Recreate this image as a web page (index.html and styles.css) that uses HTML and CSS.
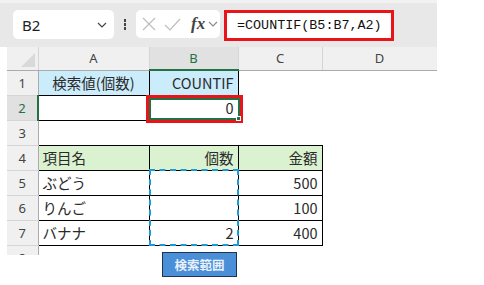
FILE: index.html
```html
<!DOCTYPE html>
<html lang="ja">
<head>
    <meta charset="UTF-8">
    <title>COUNTIF</title>
    <link rel="stylesheet" href="styles.css">
</head>
<body>
    <div class="app">
        <div class="toolbar">
            <div class="name-box">
                <span class="name-text">B2</span>
                <svg class="chev" width="10" height="6" viewBox="0 0 10 6"><polyline points="1,1 5,5 9,1" fill="none" stroke="#444" stroke-width="1.2"/></svg>
            </div>
            <div class="dots"><span></span><span></span><span></span></div>
            <div class="fx-box">
                <svg width="14" height="14" viewBox="0 0 14 14"><path d="M1 1 L13 13 M13 1 L1 13" stroke="#bdbdbd" stroke-width="1.2"/></svg>
                <svg width="17" height="13" viewBox="0 0 17 13"><polyline points="1,7 6,12 16,1" fill="none" stroke="#bdbdbd" stroke-width="1.2"/></svg>
                <span class="fx">fx</span>
                <svg width="10" height="6" viewBox="0 0 10 6"><polyline points="1,1 5,5 9,1" fill="none" stroke="#888" stroke-width="1.1"/></svg>
            </div>
            <div class="formula">=COUNTIF(B5:B7,A2)</div>
        </div>

        <div class="sheet">
            <table>
                <colgroup>
                    <col class="c-head"><col class="c-a"><col class="c-b"><col class="c-c"><col class="c-d">
                </colgroup>
                <tr class="col-head">
                    <th class="corner">
                        <svg width="16" height="16" viewBox="0 0 16 16"><polygon points="1,15 15,15 15,1" fill="#d9d9d9"/></svg>
                    </th>
                    <th>A</th>
                    <th class="sel-col">B</th>
                    <th>C</th>
                    <th>D</th>
                </tr>
                <tr>
                    <th class="row-head">1</th>
                    <td class="bd blue center">検索値(個数)</td>
                    <td class="bd blue num">COUNTIF</td>
                    <td></td><td></td>
                </tr>
                <tr>
                    <th class="row-head sel-row">2</th>
                    <td class="bd"></td>
                    <td class="bd num">0</td>
                    <td></td><td></td>
                </tr>
                <tr>
                    <th class="row-head">3</th>
                    <td></td><td></td><td></td><td></td>
                </tr>
                <tr>
                    <th class="row-head">4</th>
                    <td class="bd green">項目名</td>
                    <td class="bd green num">個数</td>
                    <td class="bd green num">金額</td>
                    <td></td>
                </tr>
                <tr>
                    <th class="row-head">5</th>
                    <td class="bd">ぶどう</td>
                    <td class="bd num"></td>
                    <td class="bd num">500</td>
                    <td></td>
                </tr>
                <tr>
                    <th class="row-head">6</th>
                    <td class="bd">りんご</td>
                    <td class="bd num"></td>
                    <td class="bd num">100</td>
                    <td></td>
                </tr>
                <tr>
                    <th class="row-head">7</th>
                    <td class="bd">バナナ</td>
                    <td class="bd num">2</td>
                    <td class="bd num">400</td>
                    <td></td>
                </tr>
                <tr>
                    <th class="row-head">8</th>
                    <td></td><td></td><td></td><td></td>
                </tr>
            </table>
        </div>

        <!-- overlays on the sheet -->
        <div class="active-cell"><div class="active-inner"></div><div class="fill-handle"></div></div>
        <div class="range-marquee"></div>
        <div class="shape-btn">検索範囲</div>
    </div>
</body>
</html>
```

FILE: styles.css
```css
* {
    margin: 0;
    padding: 0;
    box-sizing: border-box;
}

body {
    background-color: #fff;
    font-family: "Noto Sans CJK JP", "Noto Sans", sans-serif;
    color: #222;
}

.app {
    position: relative;
    width: 484px;
    height: 285px;
}

/* formula bar */
.toolbar {
    width: 437px;
    height: 47px;
    background-color: #e8e8e8;
    border-top: 3px solid #f2f2f2;
    display: flex;
    align-items: flex-start;
    padding: 7px 0 0 13px;
}

.name-box {
    width: 101px;
    height: 29px;
    background-color: #fff;
    border-radius: 5px;
    display: flex;
    align-items: center;
    justify-content: space-between;
    padding: 0 7px 0 9px;
}

.name-text {
    font-family: "Noto Sans", sans-serif;
    font-size: 15px;
    color: #222;
}

.dots {
    width: 22px;
    height: 29px;
    display: flex;
    flex-direction: column;
    align-items: center;
    justify-content: center;
    gap: 1.5px;
}

.dots span {
    width: 2.5px;
    height: 2.5px;
    background-color: #444;
}

.fx-box {
    width: 84px;
    height: 28px;
    background-color: #fff;
    border-radius: 5px;
    display: flex;
    align-items: center;
    gap: 8px;
    padding-left: 6px;
}

.fx {
    font-family: "Liberation Serif", serif;
    font-style: italic;
    font-weight: bold;
    font-size: 17px;
    color: #444;
    margin-left: 2px;
    margin-right: -5px;
}

.formula {
    margin-left: 4px;
    width: 170px;
    height: 31px;
    background-color: #fff;
    border: 3px solid #e8141a;
    font-family: "Liberation Mono", monospace;
    font-size: 13.4px;
    line-height: 25px;
    padding-left: 10px;
    color: #111;
}

/* grid */
.sheet {
    margin-left: 7px;
    width: 430px;
    height: 208px;
    overflow: hidden;
}

table {
    border-collapse: collapse;
    table-layout: fixed;
    width: 430px;
}

.c-head { width: 31px; }
.c-a { width: 111px; }
.c-b { width: 89px; }
.c-c { width: 84px; }
.c-d { width: 115px; }

tr {
    height: 25px;
}

td {
    padding: 0 4px;
    font-size: 14.5px;
    white-space: nowrap;
    overflow: hidden;
    color: #2a2a2a;
}

.col-head {
    height: 23px;
}

.col-head th {
    background-color: #f0f0f0;
    border-bottom: 1px solid #ababab;
    border-right: 1px solid #d5d5d5;
    font-family: "Noto Sans", sans-serif;
    font-weight: normal;
    font-size: 13px;
    color: #444;
    text-align: center;
}

.col-head .corner {
    text-align: right;
    vertical-align: bottom;
    padding: 0 2px 2px 0;
}

.corner svg {
    display: block;
    margin-left: auto;
}

.row-head {
    background-color: #f0f0f0;
    border-right: 1px solid #ababab;
    border-bottom: 1px solid #d5d5d5;
    font-family: "Noto Sans", sans-serif;
    font-weight: normal;
    font-size: 13px;
    color: #444;
    text-align: center;
    vertical-align: middle;
}

.col-head th.sel-col {
    background-color: #e1e1e1;
    color: #217346;
    border-bottom: 2px solid #217346;
}

.row-head.sel-row {
    background-color: #e1e1e1;
    color: #217346;
    border-right: 2px solid #217346;
}

.bd {
    border: 1px solid #000;
}

.blue {
    background-color: #cbecfb;
}

.green {
    background-color: #daf2d0;
}

.center {
    text-align: center;
}

.num {
    text-align: right;
}

/* overlays */
.active-cell {
    position: absolute;
    left: 146px;
    top: 95px;
    width: 97px;
    height: 28px;
    border: 3px solid #e8141a;
}

.active-inner {
    width: 100%;
    height: 100%;
    border: 2px solid #217346;
}

.fill-handle {
    position: absolute;
    right: -1px;
    bottom: -1px;
    width: 5px;
    height: 5px;
    background-color: #217346;
    border: 1px solid #fff;
}

.range-marquee {
    position: absolute;
    left: 149px;
    top: 169px;
    width: 90px;
    height: 77px;
    border: 2px dashed #1a9ad6;
}

.shape-btn {
    position: absolute;
    left: 162px;
    top: 252px;
    width: 75px;
    height: 25px;
    background-color: #4a8fd8;
    border: 1px solid #1f3451;
    color: #e9f1fa;
    font-size: 12.5px;
    font-weight: bold;
    text-align: center;
    line-height: 23px;
}
```
